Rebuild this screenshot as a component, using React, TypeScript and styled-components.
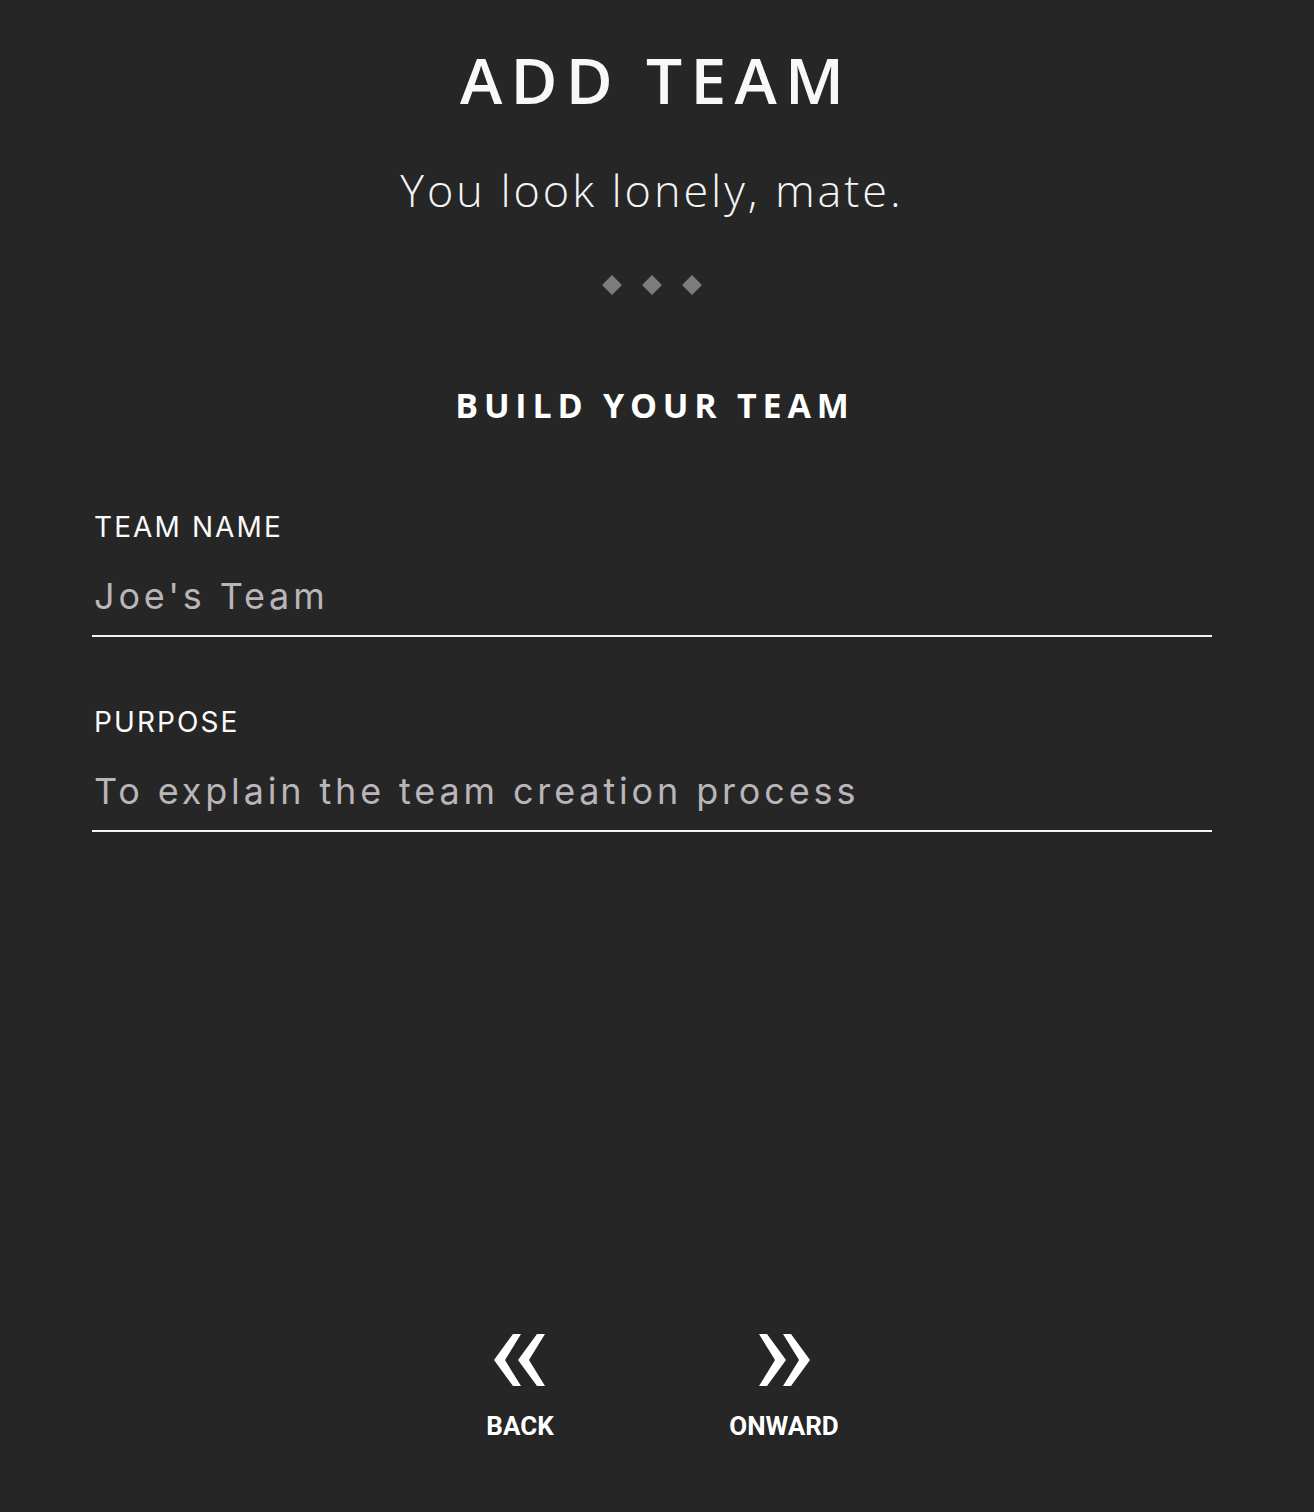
import React from "react";
import styled, { createGlobalStyle } from "styled-components";

const Global = createGlobalStyle`
  html, body { margin: 0; padding: 0; background: #262626; }
  body { font-family: "Open Sans", sans-serif; color: #fafafa; }
  * { box-sizing: border-box; }
`;

const Page = styled.div`
  width: 1304px;
  min-height: 1512px;
  display: flex;
  flex-direction: column;
  align-items: center;
`;

const Title = styled.h1`
  margin: 44px 0 0;
  font-family: "Open Sans", sans-serif;
  font-weight: 600;
  font-size: 64px;
  line-height: 72px;
  letter-spacing: 0.13em;
  padding-left: 0.13em;
  color: #f8f8f8;
`;

const Subtitle = styled.p`
  margin: 46px 0 0;
  font-family: "Open Sans", sans-serif;
  font-weight: 300;
  font-size: 45px;
  line-height: 56px;
  letter-spacing: 0.065em;
  color: #f4f4f4;
`;

const Dots = styled.div`
  margin-top: 57px;
  display: flex;
  gap: 26px;
  height: 20px;
  align-items: center;
`;

const Diamond = styled.span`
  width: 14px;
  height: 14px;
  background: #7c7c7c;
  transform: rotate(45deg);
`;

const Section = styled.h2`
  margin: 90px 0 0;
  font-family: "Open Sans", sans-serif;
  font-weight: 700;
  font-size: 34px;
  line-height: 40px;
  letter-spacing: 0.17em;
  padding-left: 0.17em;
  color: #fff;
`;

const Form = styled.div`
  width: 1120px;
  margin-top: 86px;
  display: flex;
  flex-direction: column;
  gap: 69px;
`;

const Field = styled.label`
  display: flex;
  flex-direction: column;
  border-bottom: 2px solid #f4f4f4;
  padding-left: 2px;
`;

const Label = styled.span`
  font-family: "Inter", sans-serif;
  font-weight: 400;
  font-size: 28px;
  line-height: 32px;
  letter-spacing: 0.075em;
  color: #fafafa;
`;

const Input = styled.input`
  margin-top: 31px;
  margin-bottom: 17px;
  background: transparent;
  border: none;
  outline: none;
  padding: 0;
  font-family: "Inter", sans-serif;
  font-size: 36px;
  line-height: 44px;
  letter-spacing: 0.107em;
  color: #b9b5b9;
  width: 100%;
`;

const Nav = styled.div`
  margin-top: auto;
  margin-bottom: 74px;
  display: flex;
  gap: 140px;
  align-items: flex-end;
`;

const NavButton = styled.button`
  display: flex;
  flex-direction: column;
  align-items: center;
  gap: 28px;
  width: 124px;
  background: none;
  border: none;
  padding: 0;
  cursor: pointer;
  color: #fff;
  font-family: "Roboto", sans-serif;
  font-weight: 700;
  font-size: 26px;
  line-height: 24px;
`;

const Chevrons = ({ dir }: { dir: "left" | "right" }) => (
  <svg width="52" height="52" viewBox="0 0 52 52" fill="#fff">
    <g transform={dir === "right" ? "translate(52 0) scale(-1 1)" : undefined}>
      <polygon points="0,26 19,0 27,0 11,26 27,52 19,52" />
      <polygon points="24,26 43,0 51,0 35,26 51,52 43,52" />
    </g>
  </svg>
);

export default function App() {
  return (
    <>
      <Global />
      <Page>
        <Title>ADD TEAM</Title>
        <Subtitle>You look lonely, mate.</Subtitle>
        <Dots>
          <Diamond />
          <Diamond />
          <Diamond />
        </Dots>
        <Section>BUILD YOUR TEAM</Section>
        <Form>
          <Field>
            <Label>TEAM NAME</Label>
            <Input defaultValue="Joe's Team" />
          </Field>
          <Field>
            <Label>PURPOSE</Label>
            <Input defaultValue="To explain the team creation process" />
          </Field>
        </Form>
        <Nav>
          <NavButton>
            <Chevrons dir="left" />
            BACK
          </NavButton>
          <NavButton>
            <Chevrons dir="right" />
            ONWARD
          </NavButton>
        </Nav>
      </Page>
    </>
  );
}
